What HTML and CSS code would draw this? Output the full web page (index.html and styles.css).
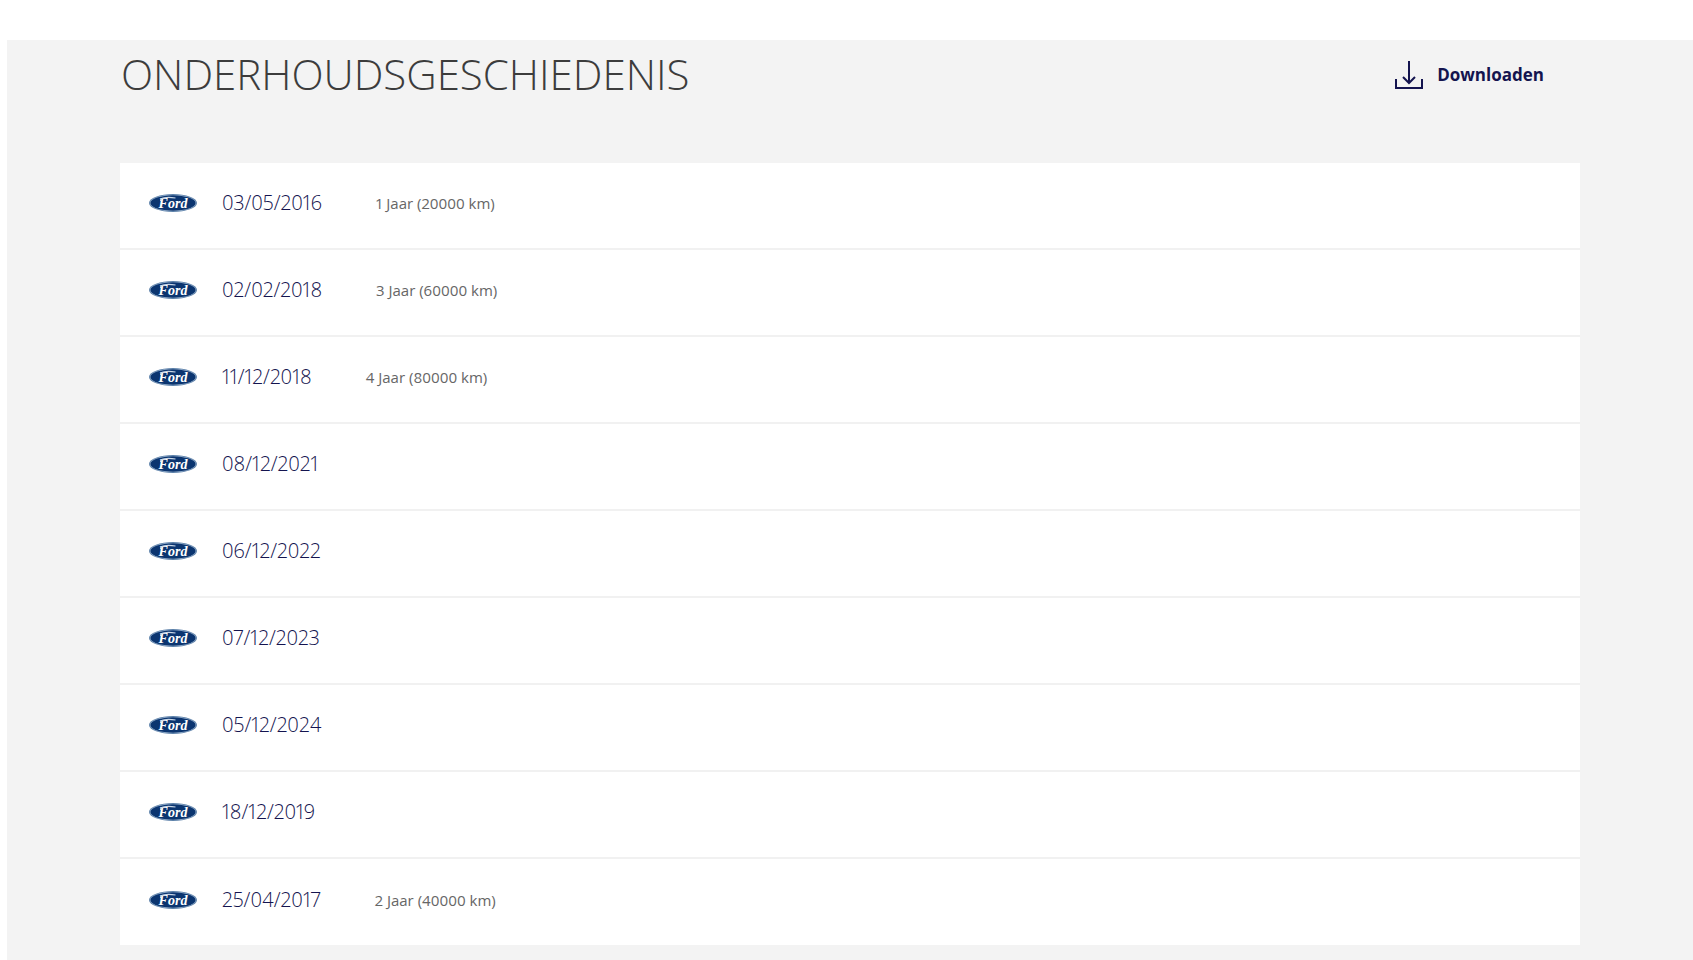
FILE: index.html
```html
<!DOCTYPE html>
<html lang="nl">
<head>
    <meta charset="UTF-8">
    <meta name="viewport" content="width=device-width, initial-scale=1.0">
    <title>Onderhoudsgeschiedenis</title>
    <link rel="stylesheet" href="styles.css">
</head>
<body>

    <!-- Ford logo, used in every row -->
    <svg class="symbols" aria-hidden="true">
        <symbol id="ford" viewBox="0 0 48 18">
            <ellipse cx="24" cy="9" rx="24" ry="9" fill="#5f83ab"/>
            <ellipse cx="24" cy="9" rx="23" ry="8" fill="#a9bfd6"/>
            <ellipse cx="24" cy="9" rx="22.6" ry="7.7" fill="#0b3570"/>
            <text class="logo-text" x="24" y="13.5" text-anchor="middle">Ford</text>
            <path d="M11.5 7C11 4 17 2.4 26.5 4" fill="none" stroke="#c9d7e6" stroke-width="1.1"/>
        </symbol>
    </svg>

    <main class="history">
        <header class="history-header">
            <h1>ONDERHOUDSGESCHIEDENIS</h1>
            <button type="button" class="download">
                <svg width="28" height="30" viewBox="0 0 28 30" fill="none" stroke="#14144f" stroke-width="2" aria-hidden="true">
                    <path d="M14 1V23M8 17L14 23L20 17"/>
                    <path d="M1 19V28H27V19"/>
                </svg>
                Downloaden
            </button>
        </header>

        <ul class="services">
            <li>
                <svg class="logo" role="img" aria-label="Ford"><use href="#ford"/></svg>
                <time datetime="2016-05-03">03/05/2016</time>
                <span class="interval">1 Jaar (20000 km)</span>
            </li>
            <li>
                <svg class="logo" role="img" aria-label="Ford"><use href="#ford"/></svg>
                <time datetime="2018-02-02">02/02/2018</time>
                <span class="interval">3 Jaar (60000 km)</span>
            </li>
            <li>
                <svg class="logo" role="img" aria-label="Ford"><use href="#ford"/></svg>
                <time datetime="2018-12-11">11/12/2018</time>
                <span class="interval">4 Jaar (80000 km)</span>
            </li>
            <li>
                <svg class="logo" role="img" aria-label="Ford"><use href="#ford"/></svg>
                <time datetime="2021-12-08">08/12/2021</time>
            </li>
            <li>
                <svg class="logo" role="img" aria-label="Ford"><use href="#ford"/></svg>
                <time datetime="2022-12-06">06/12/2022</time>
            </li>
            <li>
                <svg class="logo" role="img" aria-label="Ford"><use href="#ford"/></svg>
                <time datetime="2023-12-07">07/12/2023</time>
            </li>
            <li>
                <svg class="logo" role="img" aria-label="Ford"><use href="#ford"/></svg>
                <time datetime="2024-12-05">05/12/2024</time>
            </li>
            <li>
                <svg class="logo" role="img" aria-label="Ford"><use href="#ford"/></svg>
                <time datetime="2019-12-18">18/12/2019</time>
            </li>
            <li>
                <svg class="logo" role="img" aria-label="Ford"><use href="#ford"/></svg>
                <time datetime="2017-04-25">25/04/2017</time>
                <span class="interval">2 Jaar (40000 km)</span>
            </li>
        </ul>
    </main>

</body>
</html>
```
FILE: styles.css
```css
* {
    box-sizing: border-box;
}
body {
    font-family: "Open Sans", "Noto Sans", sans-serif;
    background-color: #fff;
    color: #3c3c3c;
    margin: 0;
    padding: 40px 0 0 7px;
}
.symbols {
    display: none;
}
.history {
    background-color: #f3f3f3;
    padding: 0 113px 16px;
}
.history-header {
    display: flex;
    justify-content: space-between;
    align-items: flex-start;
    padding: 9px 36px 64px 1px;
}
h1 {
    margin: 0;
    font-size: 42px;
    font-weight: 300;
    line-height: 50px;
}
.download {
    display: flex;
    align-items: center;
    gap: 14px;
    margin-top: 11px;
    padding: 0;
    border: none;
    background: none;
    color: #14144f;
    font-family: inherit;
    font-size: 17px;
    font-weight: 700;
    line-height: 24px;
    cursor: pointer;
}
.services {
    list-style-type: none;
    margin: 0;
    padding: 0;
    font-variant-numeric: proportional-nums;
}
.services li {
    display: flex;
    align-items: center;
    height: 87px;
    padding: 0 29px 5px;
    background-color: #fff;
    border-bottom: 2px solid #f1f1f1;
}
.services li:last-child {
    height: 86px;
    border-bottom: none;
}
.logo {
    width: 48px;
    height: 18px;
    margin-right: 25px;
}
.logo-text {
    font-family: "Liberation Serif", serif;
    font-size: 14px;
    font-style: italic;
    font-weight: 700;
    fill: #fff;
}
time {
    color: #14144f;
    font-size: 20px;
    font-weight: 300;
    line-height: 28px;
}
.interval {
    margin-left: 54px;
    color: #666;
    font-size: 15px;
    line-height: 20px;
}
```
